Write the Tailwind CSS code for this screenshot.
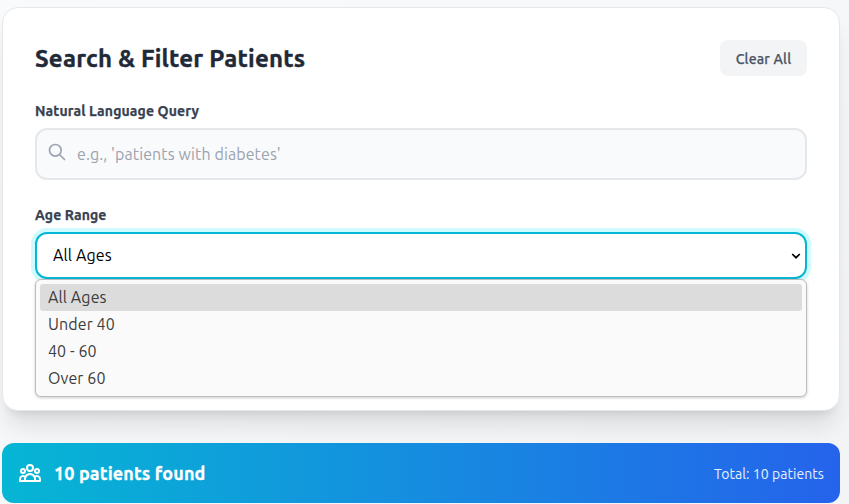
<!DOCTYPE html>
<html lang="en">
<head>
<meta charset="utf-8">
<title>Search &amp; Filter Patients</title>
<script src="https://cdn.jsdelivr.net/npm/@tailwindcss/browser@4"></script>
</head>
<body class="h-[504px] overflow-hidden bg-linear-to-br from-[#f9fafb] to-[#f3f4f6] pt-[7px] pl-[2px] font-['Ubuntu','Noto_Sans',sans-serif]">
<main class="w-[838px]">
  <section class="h-[404px] rounded-2xl border border-[#e5e7eb] bg-white px-8 pt-8 shadow-[0_20px_25px_-5px_rgba(0,0,0,0.1),0_8px_10px_-6px_rgba(0,0,0,0.1)]">
    <div class="flex h-9 items-center justify-between">
      <h2 class="pt-[2px] text-[24px] leading-8 font-bold tracking-[0.22px] whitespace-nowrap text-[#1f2937] [-webkit-text-stroke:0.4px_#1f2937]">Search &amp; Filter Patients</h2>
      <button class="h-9 w-[87px] rounded-lg bg-[#f3f4f6] pt-px text-[14px] leading-5 font-medium tracking-[0.2px] whitespace-nowrap text-[#4b5563] [-webkit-text-stroke:0.25px_#4b5563]">Clear All</button>
    </div>
    <div class="mt-[25px]">
      <label class="block text-[14px] leading-5 font-semibold tracking-[0.13px] text-[#374151] [-webkit-text-stroke:0.25px_#374151]">Natural Language Query</label>
      <div class="mt-[7px] flex h-[52px] items-center rounded-xl border-2 border-[#e5e7eb] bg-[#f9fafb] pl-[10px]">
        <svg class="-mt-[4px] size-5 text-[#9ca3af]" viewBox="0 0 24 24" fill="none" stroke="currentColor" stroke-width="2" stroke-linecap="round" stroke-linejoin="round"><path d="M21 21l-6-6m2-5a7 7 0 11-14 0 7 7 0 0114 0z"/></svg>
        <span class="ml-[10px] text-[16px] leading-6 tracking-[0.1px] whitespace-nowrap text-[#9ca3af]">e.g., 'patients with diabetes'</span>
      </div>
    </div>
    <div class="mt-[25px]">
      <label class="block text-[14px] leading-5 font-semibold tracking-[0.13px] text-[#374151] [-webkit-text-stroke:0.25px_#374151]">Age Range</label>
      <div class="relative mt-[7px] flex h-[47px] items-center justify-between rounded-xl border-2 border-[#06b6d4] bg-white pr-[4px] pl-4 shadow-[0_0_0_4px_#cffafe]">
        <span class="-mt-px text-[16px] leading-6 tracking-[0.12px] text-black">All Ages</span>
        <svg class="h-[6px] w-[10px]" viewBox="0 0 10 6" fill="none" stroke="black" stroke-width="1.7"><path d="M1.2 1l3.8 3.7L8.8 1"/></svg>
        <ul class="absolute top-[45px] -left-[2px] h-[118px] w-[772px] rounded-[6px] border border-[#bdbdbd] bg-[#fafafa] p-1 text-[16px] leading-[27px] tracking-[0.1px] text-[#3d3d3d] shadow-[0_1px_3px_rgba(0,0,0,0.2)]">
          <li class="h-[27px] rounded-[3px] bg-[#dcdcdc] pl-2">All Ages</li>
          <li class="h-[27px] pl-2">Under 40</li>
          <li class="h-[27px] pl-2">40 - 60</li>
          <li class="h-[27px] pl-2">Over 60</li>
        </ul>
      </div>
    </div>
  </section>
  <section class="mt-8 flex h-[60px] items-center rounded-xl bg-linear-to-r/srgb from-[#06b6d4] to-[#2563eb] px-4 text-white">
    <svg class="size-6" viewBox="0 0 24 24" fill="none" stroke="currentColor" stroke-width="2" stroke-linecap="round" stroke-linejoin="round"><path d="M17 20h5v-2a3 3 0 00-5.356-1.857M17 20H7m10 0v-2c0-.656-.126-1.283-.356-1.857M7 20H2v-2a3 3 0 015.356-1.857M7 20v-2c0-.656.126-1.283.356-1.857m0 0a5.002 5.002 0 019.288 0M15 7a3 3 0 11-6 0 3 3 0 016 0zm6 3a2 2 0 11-4 0 2 2 0 014 0zM7 10a2 2 0 11-4 0 2 2 0 014 0z"/></svg>
    <span class="ml-3 text-[18px] leading-7 font-semibold tracking-[0.13px] whitespace-nowrap [-webkit-text-stroke:0.3px_white]">10 patients found</span>
    <span class="ml-auto pt-px text-[14px] leading-5 tracking-[0.06px] whitespace-nowrap text-white/90">Total: 10 patients</span>
  </section>
</main>
</body>
</html>
